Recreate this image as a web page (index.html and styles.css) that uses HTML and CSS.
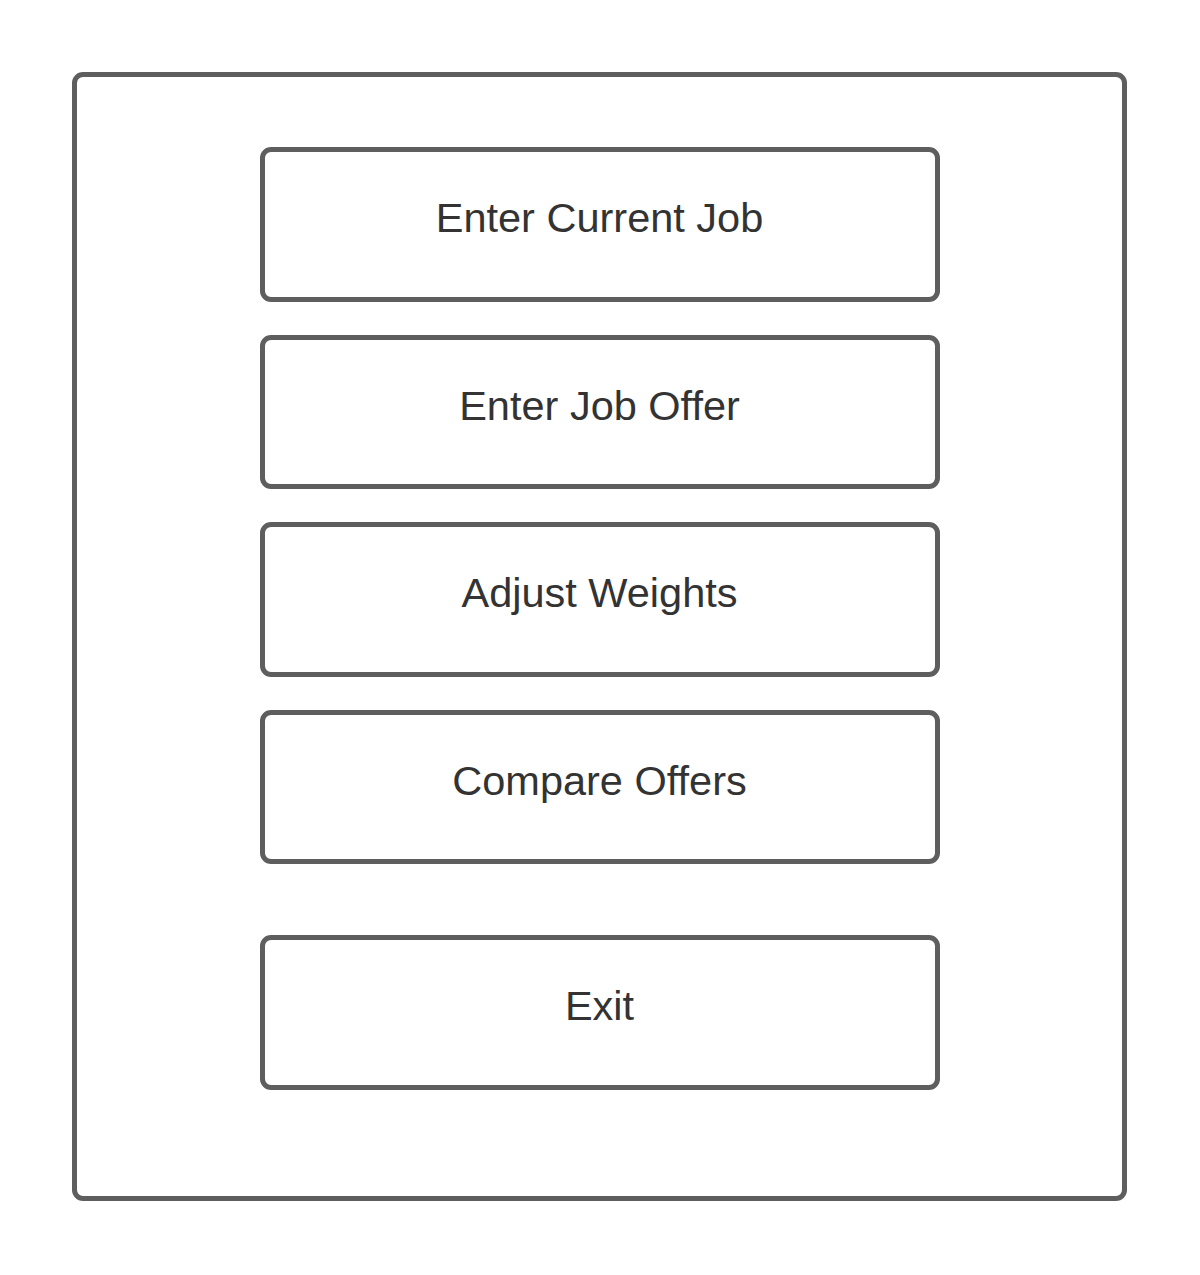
FILE: index.html
```html
<!DOCTYPE html>
<html>
<head>
<meta charset="utf-8">
<link rel="stylesheet" href="styles.css">
</head>
<body>
<div class="frame">
  <div class="menu">
    <div class="btn">Enter Current Job</div>
    <div class="btn">Enter Job Offer</div>
    <div class="btn">Adjust Weights</div>
    <div class="btn">Compare Offers</div>
  </div>
  <div class="btn exit">Exit</div>
</div>
</body>
</html>
```
FILE: styles.css
```css
html, body {
  margin: 0;
  padding: 0;
  background: #ffffff;
}
body {
  padding: 72px 0 0 72px;
  font-family: "Liberation Sans", Arial, sans-serif;
}
.frame {
  box-sizing: border-box;
  width: 1055px;
  height: 1129px;
  border: 5px solid #5e5e5e;
  border-radius: 11px;
  padding-top: 70px;
  display: flex;
  flex-direction: column;
  align-items: center;
}
.menu {
  display: flex;
  flex-direction: column;
  gap: 33px;
}
.btn {
  box-sizing: border-box;
  width: 680px;
  height: 154.5px;
  border: 5px solid #5e5e5e;
  border-radius: 11px;
  display: flex;
  align-items: center;
  justify-content: center;
  padding-bottom: 12px;
  font-size: 41.5px;
  color: #333333;
}
.exit {
  margin-top: 71px;
}
```
